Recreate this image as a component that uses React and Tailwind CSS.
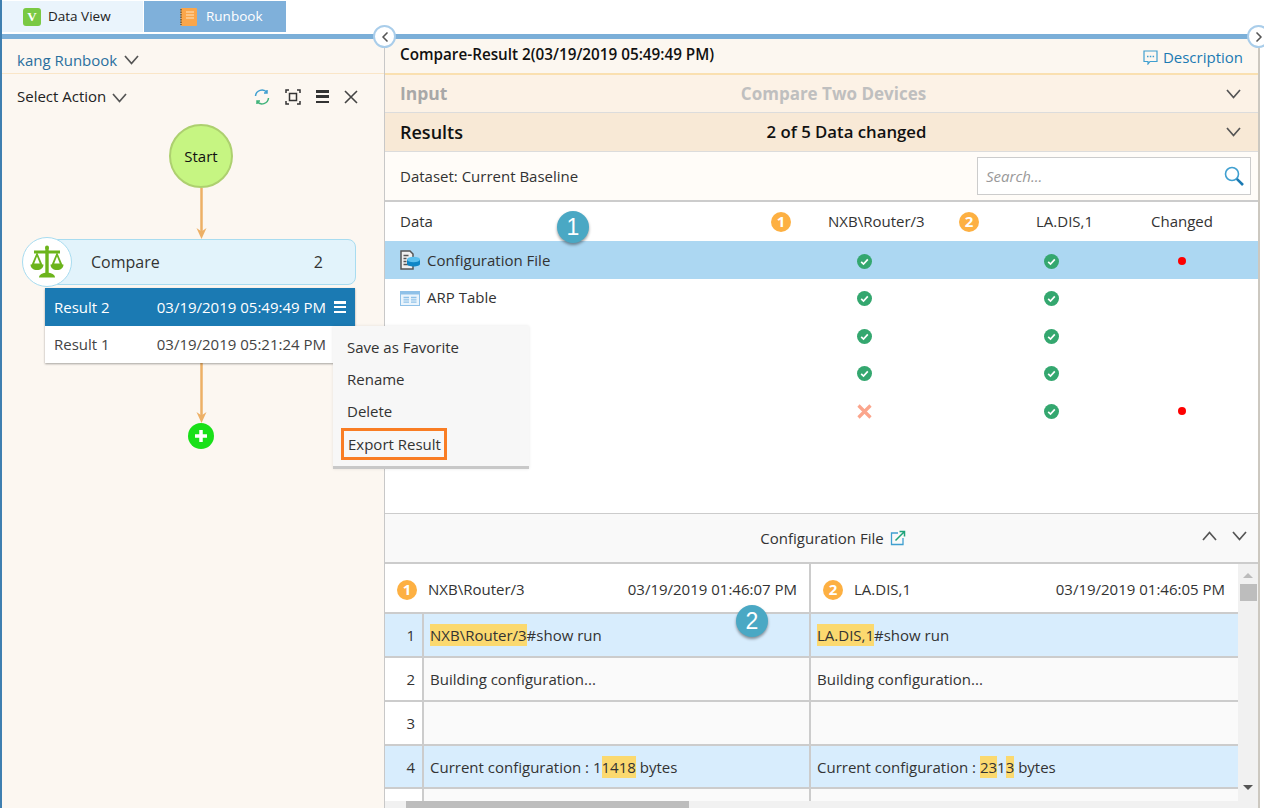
import { ChevronLeft, ChevronRight } from 'lucide-react';

// names of rows 3-5 are hidden behind the context menu in the picture
const dataRows = [
  { id: 1, name: 'Configuration File', icon: 'config', left: true, right: true, changed: true, selected: true },
  { id: 2, name: 'ARP Table', icon: 'table', left: true, right: true },
  { id: 3, left: true, right: true },
  { id: 4, left: true, right: true },
  { id: 5, left: false, right: true, changed: true },
];

const menuItems = ['Save as Favorite', 'Rename', 'Delete'];

function Chev({ up, className = '' }) {
  return (
    <svg width="15" height="10" viewBox="0 0 15 10" fill="none" className={className}>
      <path d={up ? 'M1 9l6.500-7.500L14 9' : 'M1 1l6.500 7.500L14 1'} stroke="#555" strokeWidth="1.700" />
    </svg>
  );
}

function CheckIcon() {
  return (
    <svg width="15" height="15" viewBox="0 0 15 15" className="mt-[3px]">
      <circle cx="7.5" cy="7.5" r="7.5" fill="#34a76f" />
      <path d="M4.2 7.8l2.3 2.2 4.3-4.6" fill="none" stroke="#fff" strokeWidth="1.7" />
    </svg>
  );
}

function CrossIcon() {
  return (
    <svg width="15" height="15" viewBox="0 0 15 15" className="mt-[3px]">
      <path d="M1.5 1.5l12 12M13.5 1.5l-12 12" fill="none" stroke="#fba58c" strokeWidth="3.2" />
    </svg>
  );
}

function NumBadge({ n }) {
  return (
    <span className="flex h-5 w-5 shrink-0 items-center justify-center rounded-full bg-[#fdb042] text-[15px] font-bold leading-none text-white">
      {n}
    </span>
  );
}

function Callout({ n, className }) {
  return (
    <div className={`absolute flex h-8 w-8 items-center justify-center rounded-full bg-[#4aa8c4] font-['Liberation_Sans',sans-serif] text-[23px] leading-none text-white shadow-[0_2px_3px_rgba(0,0,0,0.4)] ${className}`}>
      {n}
    </div>
  );
}

function Collapse({ right, className }) {
  return (
    <div className={`absolute z-20 flex h-[23px] w-[23px] items-center justify-center rounded-full border-2 border-[#a9cdea] bg-white text-[#555] ${className}`}>
      {right ? <ChevronRight size={16} strokeWidth={2.5} /> : <ChevronLeft size={16} strokeWidth={2.5} />}
    </div>
  );
}

function FlowArrow({ height }) {
  return (
    <svg width="11" height={height} viewBox={`0 0 11 ${height}`} className="block">
      <path d={`M5.5 0V${height - 4}`} stroke="#edb066" strokeWidth="2.500" />
      <path d={`M0.500 ${height - 11}l5 3.500 5-3.500-5 11z`} fill="#edb066" />
    </svg>
  );
}

function ScaleIcon() {
  return (
    <svg width="34" height="34" viewBox="0 0 34 34" fill="#6cb41c">
      <circle cx="17" cy="2.500" r="2" />
      <rect x="15.300" y="3" width="3.400" height="25" />
      <rect x="4" y="5.500" width="26" height="3" />
      <path d="M9 32.500c0-3 3.500-4.800 8-4.800s8 1.800 8 4.800z" />
      <path d="M7 7L1.500 20h11z M7 11.500L4.200 18.500h5.600z" fillRule="evenodd" />
      <path d="M0.500 19.500h13c0 3.500-2.800 5.500-6.500 5.500s-6.500-2-6.500-5.500z" />
      <path d="M27 7l-5.500 13h11z M27 11.500l-2.800 7h5.600z" fillRule="evenodd" />
      <path d="M20.500 19.500h13c0 3.500-2.800 5.500-6.500 5.500s-6.500-2-6.500-5.500z" />
    </svg>
  );
}

function ConfigIcon() {
  return (
    <svg width="20" height="20" viewBox="0 0 20 20" className="shrink-0">
      <path d="M1 1h9l3 3v15H1z" fill="#f0f0f0" stroke="#555" strokeWidth="1.500" />
      <path d="M3.500 5.500h5M3.500 8.500h3M3.500 11.500h3M3.500 14.500h6" stroke="#555" strokeWidth="1.300" />
      <path d="M7 9.500h13v4.500c0 1.500-3 2.500-6.500 2.500S7 15.500 7 14z" fill="#0f86c6" />
      <ellipse cx="13.500" cy="9.500" rx="6.500" ry="2.700" fill="#5cc0ee" />
    </svg>
  );
}

function TableIcon() {
  return (
    <svg width="20" height="15" viewBox="0 0 20 15" className="mt-[3px] shrink-0">
      <rect x="0.500" y="0.500" width="19" height="14" fill="#eaf4fc" stroke="#8fc1e8" />
      <rect x="1" y="1" width="18" height="2.500" fill="#8fc1e8" />
      <path d="M3.500 6.500h5.500M3.500 8.800h5.500M3.500 11.100h5.500M11 6.500h5.500M11 8.800h5.500M11 11.100h5.500" stroke="#8fc1e8" strokeWidth="1.300" />
    </svg>
  );
}

function Bars({ className, width = 14 }) {
  return (
    <div className={`flex flex-col justify-between ${className}`} style={{ width }}>
      <span className="block h-[2.5px] bg-current" />
      <span className="block h-[2.5px] bg-current" />
      <span className="block h-[2.5px] bg-current" />
    </div>
  );
}

function Tabs() {
  return (
    <div className="flex h-[32px] pt-px text-[13.5px]">
      <div className="flex h-[31px] w-[141px] items-center bg-[#eaf4fc] pl-[21px] text-[#222]">
        <span className="mr-[7px] flex h-[18px] w-[18px] items-center justify-center rounded-[3px] bg-[#7ac943] font-['Liberation_Serif',serif] text-[13px] font-bold text-white">V</span>
        Data View
      </div>
      <div className="flex h-[31px] w-[143px] items-center border-l border-white bg-[#7fb0da] pl-[36px] text-white">
        <svg width="18" height="18" viewBox="0 0 18 18" className="mr-[8px]">
          <rect x="1" y="0" width="16" height="18" rx="1" fill="#fba64a" />
          <path d="M1 1v16" stroke="#7a5a30" strokeWidth="1.500" strokeDasharray="1.500 1" />
          <path d="M6 4h8M6 7h8M6 10h8" stroke="#fde3c0" strokeWidth="1.200" />
        </svg>
        Runbook
      </div>
    </div>
  );
}

function LeftPanel() {
  return (
    <div className="relative w-[382px] shrink-0 bg-[#fcf7f1]">
      <div className="flex h-[35px] items-center border-b border-[#fae6c8] pl-[15px] pt-[8px]">
        <span className="text-[#2a6f9e]">kang Runbook</span>
        <Chev className="ml-[7px]" />
      </div>
      <div className="flex h-[45px] items-center pl-[15px] pr-[26px] text-[#222]">
        Select Action
        <Chev className="ml-[6px] mt-[2px]" />
        <div className="ml-auto flex items-center gap-[15px]">
          <svg width="16" height="16" viewBox="0 0 16 16" fill="none" strokeWidth="1.500">
            <path d="M1.500 7A6.500 6.500 0 0 1 13 3.500M13 1v3h-3" stroke="#3f9fd0" />
            <path d="M14.500 9A6.500 6.500 0 0 1 3 12.500M3 15v-3h3" stroke="#3fb37a" />
          </svg>
          <svg width="16" height="16" viewBox="0 0 16 16" fill="none" stroke="#333">
            <path d="M1 4V1h3M12 1h3v3M15 12v3h-3M4 15H1v-3" strokeWidth="1.500" />
            <rect x="4.500" y="4.500" width="7" height="7" strokeWidth="1.500" />
          </svg>
          <Bars width={13} className="h-[13px] text-[#333]" />
          <svg width="14" height="14" viewBox="0 0 14 14" fill="none">
            <path d="M1 1l12 12M13 1L1 13" stroke="#444" strokeWidth="1.600" />
          </svg>
        </div>
      </div>

      {/* flow canvas */}
      <div className="relative pt-[5px]">
        <div className="flex w-full flex-col items-start">
          <div className="ml-[167px] flex h-[64px] w-[64px] items-center justify-center rounded-full border-2 border-[#add06f] bg-[#c6f582] font-medium text-[#111]">
            Start
          </div>
          <div className="ml-[194px]"><FlowArrow height={51} /></div>

          <div className="relative ml-[20px] h-[46px] w-[334px]">
            <div className="ml-[10px] flex h-[46px] items-center rounded-[8px] border border-[#a8dcf0] bg-[#e2f3fb] pl-[58px] pr-[32px] text-[16px] font-medium text-[#333]">
              Compare
              <span className="ml-auto">2</span>
            </div>
            <div className="absolute left-0 top-[-2px] flex h-[50px] w-[50px] items-center justify-center rounded-full border border-[#a8dcf0] bg-white">
              <ScaleIcon />
            </div>
          </div>

          <div className="z-10 ml-[43px] mt-[3px] w-[310px] bg-white shadow-[0_1px_2px_rgba(0,0,0,0.35)]">
            <div className="flex h-[38px] items-center bg-[#1b7ab3] pl-[9px] pr-[9px] text-white">
              Result 2
              <span className="ml-auto">03/19/2019 05:49:49 PM</span>
              <Bars width={12} className="ml-[8px] h-[12px]" />
            </div>
            <div className="flex h-[37px] items-center pl-[9px] pr-[29px] text-[#444]">
              Result 1
              <span className="ml-auto">03/19/2019 05:21:24 PM</span>
            </div>
          </div>

          <div className="ml-[194px]"><FlowArrow height={60} /></div>
          <div className="ml-[186px] flex h-[26px] w-[26px] items-center justify-center rounded-full bg-[#19e019]">
            <svg width="14" height="14" viewBox="0 0 14 14">
              <path d="M7 1v12M1 7h12" stroke="#fff" strokeWidth="3.500" />
            </svg>
          </div>
        </div>
      </div>
    </div>
  );
}

function DataTable() {
  return (
    <div className="h-[312px] border-b border-[#ccc] bg-white text-[#333]">
      <div className="grid h-[39px] grid-cols-[366px_60px_106px_104px_60px_1fr] items-center whitespace-nowrap">
        <div className="pl-[15px]">Data</div>
        <div className="flex justify-center"><NumBadge n="1" /></div>
        <div className="pl-[17px]">NXB\Router/3</div>
        <div className="flex justify-center"><NumBadge n="2" /></div>
        <div className="pl-[15px]">LA.DIS,1</div>
        <div className="pl-[25px] text-center">Changed</div>
      </div>
      {dataRows.map((row) => (
        <div
          key={row.id}
          className={`grid h-[37.5px] grid-cols-[366px_60px_106px_104px_60px_1fr] items-center ${row.selected ? 'bg-[#acd7f2]' : ''}`}
        >
          <div className="flex items-center gap-[7px] pl-[15px]">
            {row.icon === 'config' && <ConfigIcon />}
            {row.icon === 'table' && <TableIcon />}
            {row.name}
          </div>
          <div />
          <div className="flex justify-center">{row.left ? <CheckIcon /> : <CrossIcon />}</div>
          <div />
          <div className="flex justify-center">{row.right ? <CheckIcon /> : <CrossIcon />}</div>
          <div className="flex justify-center pl-[24px]">
            {row.changed && <span className="mt-[3px] block h-2 w-2 rounded-full bg-[#fe0000]" />}
          </div>
        </div>
      ))}
    </div>
  );
}

function Mark({ children }) {
  return <span className="bg-[#fbd96f] py-px">{children}</span>;
}

function DiffRow({ n, left, right, height, blue }) {
  const bg = blue ? 'bg-[#d8edfd]' : 'bg-[#fafafa]';
  return (
    <div className={`flex border-b-2 border-[#ccc] ${blue ? 'bg-[#d8edfd]' : 'bg-[#fff]'}`} style={{ height }}>
      <div className="flex w-[39px] shrink-0 items-center justify-end border-r-2 border-[#ccc] pr-[7px] pt-px text-[#333]">{n}</div>
      <div className={`flex w-[387px] shrink-0 items-center border-r-2 border-[#ccc] pl-[6px] pt-px text-[#333] ${bg}`}>
        <div className="whitespace-pre">{left}</div>
      </div>
      <div className={`flex flex-1 items-center pl-[6px] pt-px text-[#333] ${bg}`}>
        <div className="whitespace-pre">{right}</div>
      </div>
    </div>
  );
}

function DiffPane() {
  return (
    <div className="flex h-[294px] flex-col overflow-hidden bg-[#f9f9f9] text-[#333]">
      <div className="relative flex h-[50px] shrink-0 items-center justify-center border-b-2 border-[#ccc] pl-[23px]">
        Configuration File
        <svg width="16" height="16" viewBox="0 0 16 16" fill="none" className="ml-[6px]">
          <path d="M8 3H1.500v11.500H13V8" stroke="#3f9fd0" strokeWidth="1.300" />
          <path d="M5.500 10.500L14 2M9.500 1.500h5v5" stroke="#1fa37a" strokeWidth="1.500" />
        </svg>
        <div className="absolute right-[11px] top-[17px] flex gap-[15px]">
          <Chev up />
          <Chev />
        </div>
      </div>

      <div className="flex min-h-0 flex-1">
        <div className="w-[853px] shrink-0">
          <div className="flex h-[50px] border-b-2 border-[#ccc] bg-white">
            <div className="flex w-[426px] shrink-0 items-center border-r-2 border-[#ccc] pl-[12px] pr-[12px] pt-[3px]">
              <NumBadge n="1" />
              <span className="ml-[11px]">NXB\Router/3</span>
              <span className="ml-auto">03/19/2019 01:46:07 PM</span>
            </div>
            <div className="flex flex-1 items-center pl-[12px] pr-[13px] pt-[3px]">
              <NumBadge n="2" />
              <span className="ml-[11px]">LA.DIS,1</span>
              <span className="ml-auto">03/19/2019 01:46:05 PM</span>
            </div>
          </div>
          <DiffRow n="1" blue height={44} left={<><Mark>NXB\Router/3</Mark>#show run</>} right={<><Mark>LA.DIS,1</Mark>#show run</>} />
          <DiffRow n="2" height={44} left="Building configuration..." right="Building configuration..." />
          <DiffRow n="3" height={44} left="" right="" />
          <DiffRow n="4" blue height={43} left={<>Current configuration : 1<Mark>1418</Mark> bytes</>} right={<>Current configuration : <Mark>23</Mark>1<Mark>3</Mark> bytes</>} />
          <DiffRow n="" height={20} left="" right="" />
        </div>

        {/* vertical scrollbar */}
        <div className="flex w-[20px] shrink-0 flex-col items-center bg-[#f1f1f1] pt-[9px]">
          <span className="block h-0 w-0 border-x-[5px] border-b-[5px] border-x-transparent border-b-[#bbb]" />
          <span className="mt-[6px] block h-[17px] w-[17px] bg-[#bdbdbd]" />
          <span className="mt-[184px] block h-0 w-0 border-x-[5px] border-t-[5px] border-x-transparent border-t-[#555]" />
        </div>
      </div>

      {/* horizontal scrollbar */}
      <div className="h-[7px] shrink-0 bg-[#f1f1f1] pl-[21px]">
        <div className="h-full w-[283px] bg-[#bdbdbd]" />
      </div>
    </div>
  );
}

function RightPanel() {
  return (
    <div className="w-[873px] shrink-0">
      <div className="flex h-[36px] items-center border-b-2 border-[#fae0b0] bg-[#fcf7f0] pl-[15px] pr-[15px]">
        <span className="mb-[4px] text-[15.25px] font-semibold text-[#111]">Compare-Result 2(03/19/2019 05:49:49 PM)</span>
        <span className="ml-auto mt-[3px] flex items-center gap-[5px] text-[#1b7ab3]">
          <svg width="15" height="15" viewBox="0 0 15 15" fill="none">
            <path d="M1 1h13v10.500H7l-2 2.500v-2.500H1z" stroke="#3f9fd0" strokeWidth="1.200" />
            <path d="M4 6.500h1.500M6.800 6.500h1.500M9.600 6.500h1.500" stroke="#3f9fd0" strokeWidth="1.500" />
          </svg>
          Description
        </span>
      </div>
      <div className="grid h-[38px] grid-cols-[1fr_auto_1fr] items-center border-b border-[#dcdcdc] bg-[#fcf2e6] pl-[15px] pr-[17px]">
        <span className="text-[17.5px] font-bold text-[#a8a8a8]">Input</span>
        <span className="translate-x-[13px] text-[17px] font-bold text-[#bfbfbf]">Compare Two Devices</span>
        <Chev className="justify-self-end" />
      </div>
      <div className="grid h-[39px] grid-cols-[1fr_auto_1fr] items-center border-b border-[#dcdcdc] bg-[#f8e9d6] pl-[15px] pr-[17px]">
        <span className="text-[18px] font-semibold text-[#111]">Results</span>
        <span className="translate-x-[26px] text-[16.75px] font-semibold text-[#111]">2 of 5 Data changed</span>
        <Chev className="justify-self-end" />
      </div>
      <div className="flex h-[50px] items-center border-b-2 border-[#ccc] bg-[#fffcf8] pl-[15px] pr-[7px] text-[#333]">
        Dataset: Current Baseline
        <div className="ml-auto flex h-[38px] w-[274px] items-center border border-[#ccc] bg-white pl-[8px] pr-[6px]">
          <span className="italic text-[#999]">Search...</span>
          <svg width="20" height="20" viewBox="0 0 20 20" fill="none" className="ml-auto">
            <circle cx="8" cy="8" r="6.500" stroke="#3f9fd0" strokeWidth="1.600" />
            <path d="M12.800 12.800L19 19" stroke="#1b7ab3" strokeWidth="2.600" />
          </svg>
        </div>
      </div>
      <DataTable />
      <DiffPane />
    </div>
  );
}

function ContextMenu() {
  return (
    <div className="absolute left-[333px] top-[326px] z-30 w-[196px] border-b-[3px] border-[#c8c8c8] bg-[#f7f7f7] pb-[6px] pl-[8px] pt-[5px] text-[#333] shadow-[0_0_3px_rgba(0,0,0,0.1)]">
      {menuItems.map((item) => (
        <div key={item} className="flex h-[32px] items-center pl-[6px]">{item}</div>
      ))}
      <div className="mt-px flex h-[32px] w-[106px] items-center border-[3px] border-[#f97d24] pl-[4px]">
        Export Result
      </div>
    </div>
  );
}

export default function App() {
  return (
    <div className="relative h-[808px] w-[1264px] overflow-hidden bg-white font-['Open_Sans',sans-serif] text-[15px] leading-normal">
      <div className="flex h-full">
        <div className="w-[2px] shrink-0 bg-[#3f7fb0]" />
        <div className="flex min-w-0 flex-1 flex-col">
          <Tabs />
          <div className="mt-[2px] h-[5px] shrink-0 bg-[#7bafd8]" />
          <div className="flex min-h-0 flex-1">
            <LeftPanel />
            <div className="w-px shrink-0 bg-[#c8c8c8]" />
            <RightPanel />
            <div className="w-[2px] shrink-0 bg-[#ccc8c0]" />
          </div>
        </div>
      </div>
      <Collapse className="left-[373px] top-[25px]" />
      <Collapse right className="left-[1247px] top-[25px]" />
      <Callout n="1" className="left-[557px] top-[211px]" />
      <Callout n="2" className="left-[736px] top-[605px]" />
      <ContextMenu />
    </div>
  );
}
